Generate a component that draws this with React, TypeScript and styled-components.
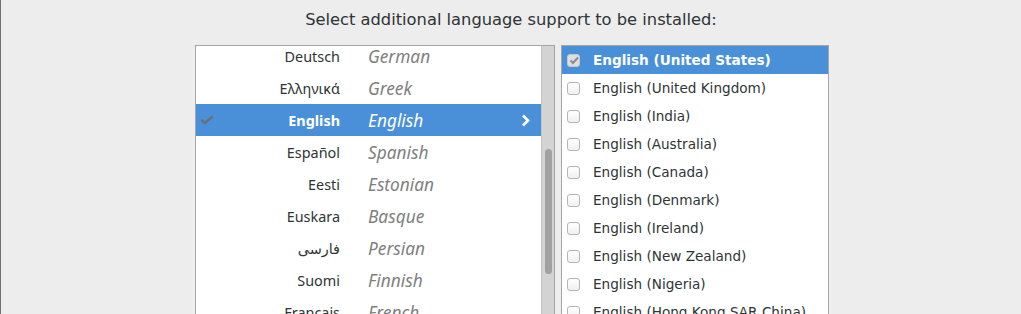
import styled, { createGlobalStyle } from "styled-components";

const GlobalStyle = createGlobalStyle`
  html, body {
    margin: 0;
    padding: 0;
    background: #ededed;
  }
  body {
    font-family: "Noto Sans", "DejaVu Sans", sans-serif;
    color: #2e3436;
  }
`;

const Page = styled.div`
  height: 314px;
  overflow: hidden;
  border-left: 1px solid #707070;
  box-sizing: border-box;
  display: flex;
  flex-direction: column;
  align-items: center;
`;

const Heading = styled.h2`
  margin: 9px 0 0 0;
  font-family: "DejaVu Sans", sans-serif;
  font-size: 16.3px;
  font-weight: normal;
  line-height: 22px;
  color: #2e3436;
`;

const Panels = styled.div`
  margin-top: 14px;
  margin-left: 2px;
  display: flex;
  gap: 6px;
  align-items: flex-start;
`;

const LangPanel = styled.div`
  width: 360px;
  height: 300px;
  display: flex;
  border: 1px solid #a6a6a6;
  border-bottom: none;
  box-sizing: border-box;
  background: #fff;
`;

const LangList = styled.div`
  flex: 1;
  overflow: hidden;
`;

/* list is scrolled a few pixels down */
const LangRows = styled.div`
  margin-top: -6px;
`;

const LangRow = styled.div<{ selected?: boolean }>`
  height: 32px;
  display: grid;
  grid-template-columns: 144px 1fr 20px;
  column-gap: 28px;
  align-items: center;
  background: ${({ selected }) => (selected ? "#4a90d9" : "transparent")};
  color: ${({ selected }) => (selected ? "#fff" : "#2e3436")};
`;

const Native = styled.div<{ selected?: boolean }>`
  display: flex;
  align-items: center;
  justify-content: space-between;
  font-size: 14.4px;
  font-weight: ${({ selected }) => (selected ? "bold" : "normal")};
  padding-left: 4px;
`;

const NativeName = styled.span`
  margin-left: auto;
`;

const English = styled.div<{ selected?: boolean }>`
  font-size: 17.3px;
  font-style: italic;
  color: ${({ selected }) => (selected ? "#fff" : "#7f7f7f")};
`;

const Chevron = styled.div`
  display: flex;
  align-items: center;
`;

const Scrollbar = styled.div`
  width: 13px;
  background: #d3d3d3;
  border-left: 1px solid #c4c4c4;
  padding: 0 3px;
  box-sizing: border-box;
`;

const Thumb = styled.div`
  margin-top: 103px;
  height: 125px;
  width: 7px;
  border-radius: 4px;
  background: #a1a1a1;
`;

const LocalePanel = styled.div`
  width: 268px;
  height: 300px;
  border: 1px solid #a6a6a6;
  border-bottom: none;
  box-sizing: border-box;
  background: #fff;
  overflow: hidden;
`;

const LocaleRow = styled.div<{ selected?: boolean }>`
  height: 28px;
  display: flex;
  align-items: center;
  gap: 13px;
  padding-left: 5px;
  font-family: "DejaVu Sans", sans-serif;
  font-size: 13.6px;
  white-space: nowrap;
  background: ${({ selected }) => (selected ? "#4a90d9" : "transparent")};
  color: ${({ selected }) => (selected ? "#fff" : "#2e3436")};
  font-weight: ${({ selected }) => (selected ? "bold" : "normal")};
`;

const Box = styled.div<{ checked?: boolean }>`
  width: 13px;
  height: 13px;
  box-sizing: border-box;
  border: 1px solid ${({ checked }) => (checked ? "#c9c9c9" : "#b5b5b5")};
  border-radius: 3px;
  background: ${({ checked }) =>
    checked ? "#dedede" : "linear-gradient(#ffffff, #f0f0f0)"};
  display: flex;
  align-items: center;
  justify-content: center;
  flex-shrink: 0;
`;

const languages = [
  { native: "Deutsch", english: "German" },
  { native: "Ελληνικά", english: "Greek" },
  { native: "English", english: "English", selected: true },
  { native: "Español", english: "Spanish" },
  { native: "Eesti", english: "Estonian" },
  { native: "Euskara", english: "Basque" },
  { native: "فارسی", english: "Persian" },
  { native: "Suomi", english: "Finnish" },
  { native: "Français", english: "French" },
  { native: "Gaeilge", english: "Irish" },
];

const locales = [
  "English (United States)",
  "English (United Kingdom)",
  "English (India)",
  "English (Australia)",
  "English (Canada)",
  "English (Denmark)",
  "English (Ireland)",
  "English (New Zealand)",
  "English (Nigeria)",
  "English (Hong Kong SAR China)",
  "English (Philippines)",
];

const CheckMark = () => (
  <svg width="14" height="10" viewBox="0 0 14 10">
    <path d="M2 5.5 L5 8 L12 2" fill="none" stroke="#6e6e6e" strokeWidth="2.4" strokeLinecap="round" />
  </svg>
);

const SmallCheck = () => (
  <svg width="10" height="9" viewBox="0 0 10 9">
    <path d="M1.5 4.5 L4 7 L9 1.5" fill="none" stroke="#8c8c8c" strokeWidth="2" />
  </svg>
);

const ChevronIcon = () => (
  <svg width="9" height="13" viewBox="0 0 9 13">
    <path d="M2 1.5 L7 6.5 L2 11.5" fill="none" stroke="#fff" strokeWidth="2.6" />
  </svg>
);

const App = () => {
  return (
    <Page>
      <GlobalStyle />
      <Heading>Select additional language support to be installed:</Heading>
      <Panels>
        <LangPanel>
          <LangList>
            <LangRows>
              {languages.map((l) => (
                <LangRow key={l.native} selected={l.selected}>
                  <Native selected={l.selected}>
                    {l.selected && <CheckMark />}
                    <NativeName>{l.native}</NativeName>
                  </Native>
                  <English selected={l.selected}>{l.english}</English>
                  <Chevron>{l.selected && <ChevronIcon />}</Chevron>
                </LangRow>
              ))}
            </LangRows>
          </LangList>
          <Scrollbar>
            <Thumb />
          </Scrollbar>
        </LangPanel>
        <LocalePanel>
          {locales.map((name, i) => (
            <LocaleRow key={name} selected={i === 0}>
              <Box checked={i === 0}>{i === 0 && <SmallCheck />}</Box>
              {name}
            </LocaleRow>
          ))}
        </LocalePanel>
      </Panels>
    </Page>
  );
};

export default App;
